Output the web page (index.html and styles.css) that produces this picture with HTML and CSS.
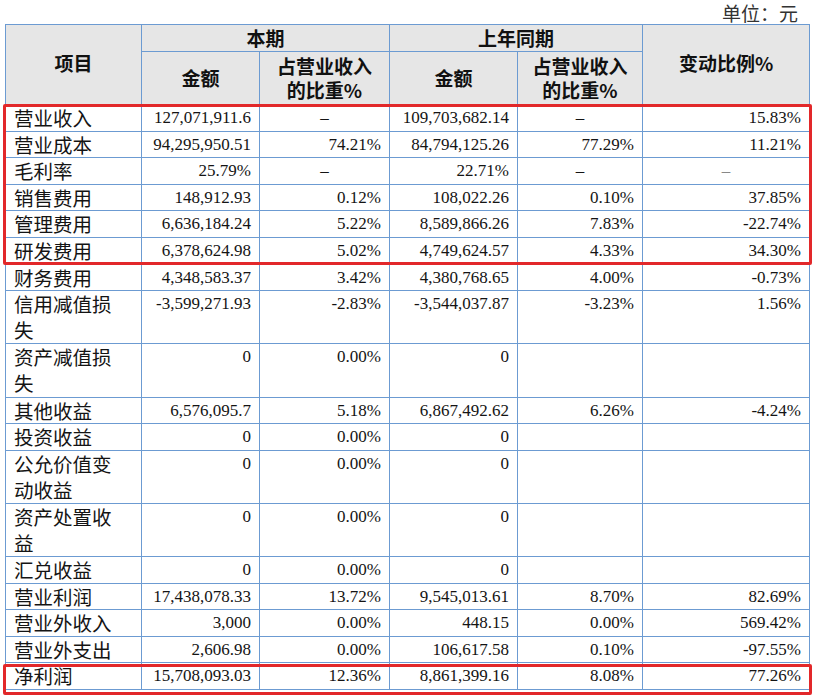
FILE: index.html
```html
<!DOCTYPE html>
<html lang="zh">
<head>
<meta charset="utf-8">
<title>利润表</title>
<link rel="stylesheet" href="styles.css">
</head>
<body>
<div class="page">
  <div class="unit">单位：元</div>
  <table class="fin">
    <colgroup>
      <col class="c1"><col class="c2"><col class="c3"><col class="c4"><col class="c5"><col class="c6">
    </colgroup>
    <thead>
      <tr class="h1">
        <th rowspan="2" class="hitem">项目</th>
        <th colspan="2">本期</th>
        <th colspan="2">上年同期</th>
        <th rowspan="2" class="hitem">变动比例%</th>
      </tr>
      <tr class="h2">
        <th>金额</th>
        <th>占营业收入<br>的比重%</th>
        <th>金额</th>
        <th>占营业收入<br>的比重%</th>
      </tr>
    </thead>
    <tbody>
      <tr class="r"><td class="lbl">营业收入</td><td>127,071,911.6</td><td class="ctr">–</td><td>109,703,682.14</td><td class="ctr">–</td><td>15.83%</td></tr>
      <tr class="r"><td class="lbl">营业成本</td><td>94,295,950.51</td><td>74.21%</td><td>84,794,125.26</td><td>77.29%</td><td>11.21%</td></tr>
      <tr class="r"><td class="lbl">毛利率</td><td>25.79%</td><td class="ctr">–</td><td>22.71%</td><td class="ctr">–</td><td class="ctr muted">–</td></tr>
      <tr class="r"><td class="lbl">销售费用</td><td>148,912.93</td><td>0.12%</td><td>108,022.26</td><td>0.10%</td><td>37.85%</td></tr>
      <tr class="r"><td class="lbl">管理费用</td><td>6,636,184.24</td><td>5.22%</td><td>8,589,866.26</td><td>7.83%</td><td>-22.74%</td></tr>
      <tr class="r"><td class="lbl">研发费用</td><td>6,378,624.98</td><td>5.02%</td><td>4,749,624.57</td><td>4.33%</td><td>34.30%</td></tr>
      <tr class="r"><td class="lbl">财务费用</td><td>4,348,583.37</td><td>3.42%</td><td>4,380,768.65</td><td>4.00%</td><td>-0.73%</td></tr>
      <tr class="r2"><td class="lbl">信用减值损<br>失</td><td>-3,599,271.93</td><td>-2.83%</td><td>-3,544,037.87</td><td>-3.23%</td><td>1.56%</td></tr>
      <tr class="r2"><td class="lbl">资产减值损<br>失</td><td>0</td><td>0.00%</td><td>0</td><td></td><td></td></tr>
      <tr class="r"><td class="lbl">其他收益</td><td>6,576,095.7</td><td>5.18%</td><td>6,867,492.62</td><td>6.26%</td><td>-4.24%</td></tr>
      <tr class="r"><td class="lbl">投资收益</td><td>0</td><td>0.00%</td><td>0</td><td></td><td></td></tr>
      <tr class="r2"><td class="lbl">公允价值变<br>动收益</td><td>0</td><td>0.00%</td><td>0</td><td></td><td></td></tr>
      <tr class="r2"><td class="lbl">资产处置收<br>益</td><td>0</td><td>0.00%</td><td>0</td><td></td><td></td></tr>
      <tr class="r"><td class="lbl">汇兑收益</td><td>0</td><td>0.00%</td><td>0</td><td></td><td></td></tr>
      <tr class="r"><td class="lbl">营业利润</td><td>17,438,078.33</td><td>13.72%</td><td>9,545,013.61</td><td>8.70%</td><td>82.69%</td></tr>
      <tr class="r"><td class="lbl">营业外收入</td><td>3,000</td><td>0.00%</td><td>448.15</td><td>0.00%</td><td>569.42%</td></tr>
      <tr class="r"><td class="lbl">营业外支出</td><td>2,606.98</td><td>0.00%</td><td>106,617.58</td><td>0.10%</td><td>-97.55%</td></tr>
      <tr class="r"><td class="lbl">净利润</td><td>15,708,093.03</td><td>12.36%</td><td>8,861,399.16</td><td>8.08%</td><td>77.26%</td></tr>
    </tbody>
  </table>
  <div class="mark mark-top"></div>
  <div class="mark mark-bottom"></div>
</div>
</body>
</html>
```

FILE: styles.css
```css
html, body {
  margin: 0;
  padding: 0;
  background: #ffffff;
}

body {
  font-family: "Liberation Serif", "Noto Sans CJK SC", serif;
  color: #141414;
}

.page {
  position: relative;
  width: 814px;
  height: 696px;
  padding-left: 5px;
  box-sizing: border-box;
  overflow: hidden;
}

.unit {
  height: 24px;
  line-height: 26px;
  text-align: right;
  padding-right: 16px;
  font-family: "Noto Sans CJK SC", sans-serif;
  font-size: 19px;
  color: #333333;
}

.fin {
  border-collapse: collapse;
  table-layout: fixed;
  width: 804px;
}

.c1 { width: 136px; }
.c2 { width: 118px; }
.c3 { width: 130px; }
.c4 { width: 128px; }
.c5 { width: 125px; }
.c6 { width: 167px; }

.fin th,
.fin td {
  border: 1px solid #6c9bd2;
  padding: 0 8px;
}

.fin thead th {
  background: #e6e6e6;
  font-family: "Noto Sans CJK SC", sans-serif;
  font-weight: bold;
  font-size: 19px;
  line-height: 24px;
  text-align: center;
  vertical-align: middle;
  color: #111111;
}

.fin thead th.hitem {
  padding-bottom: 3px;
}

.h1 { height: 27px; }
.h2 { height: 53px; }

.fin tbody td {
  font-size: 17px;
  line-height: 24.6px;
  vertical-align: top;
  text-align: right;
  padding-top: 1px;
  padding-bottom: 0;
}

.fin tbody td.lbl {
  text-align: left;
  font-family: "Noto Sans CJK SC", sans-serif;
  font-size: 19.5px;
  line-height: 25.6px;
  padding-top: 0;
  padding-left: 8px;
  padding-right: 0;
}

.fin tbody tr.r2 td.lbl {
  line-height: 26.1px;
}

.fin tbody td.ctr {
  text-align: center;
}

.fin tbody td.muted {
  color: #888888;
}

.mark {
  position: absolute;
  left: 3px;
  width: 809px;
  border: 3px solid #e2282a;
  border-radius: 2px;
  box-sizing: border-box;
}

.mark-top {
  top: 104px;
  height: 161px;
}

.mark-bottom {
  top: 664px;
  height: 31px;
}
```
